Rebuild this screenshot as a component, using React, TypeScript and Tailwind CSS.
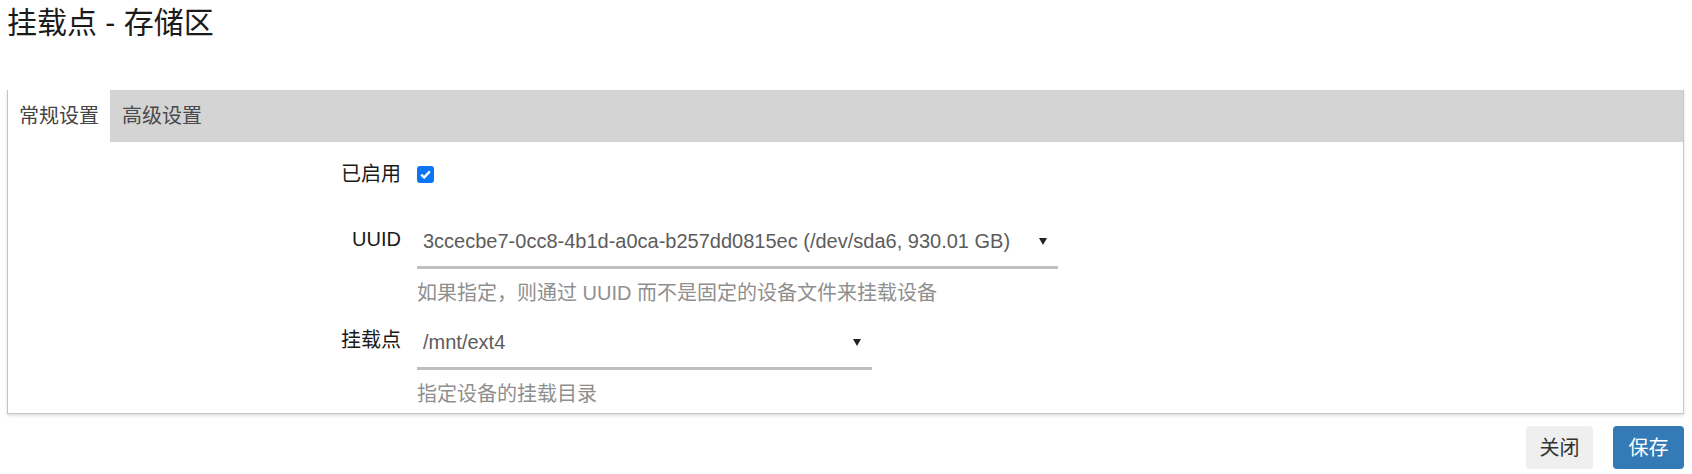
import React from "react";

function Arrow() {
  return (
    <svg width="8" height="7" viewBox="0 0 8 7" className="shrink-0">
      <polygon points="0,0 8,0 4,7" fill="#222" />
    </svg>
  );
}

function SelectField({ value, width }: { value: string; width: string }) {
  return (
    <div className={`flex h-[53px] items-center justify-between border-b-[3px] border-[#c0c0c0] ${width}`}>
      <span className="pl-[6px] text-[#5c5c5c]">{value}</span>
      <span className="mr-[11px]">
        <Arrow />
      </span>
    </div>
  );
}

export default function App() {
  return (
    <div className="w-[1692px] h-[474px] bg-white font-['Liberation_Sans','Noto_Sans_CJK_SC',sans-serif] text-[20px] leading-[28px]">
      <h2 className="pl-[7px] pt-[5px] text-[30px] leading-[35px] text-[#1a1a1a]">挂载点 - 存储区</h2>

      <div className="mt-[50px] ml-[7px] mr-[8px] border-x border-b border-[#c6c6c6] shadow-[0_2px_3px_rgba(0,0,0,0.12)]">
        <div className="flex h-[52px] bg-[#d4d4d4]">
          <div className="flex items-center bg-white px-[11px] text-[#444]">常规设置</div>
          <div className="flex items-center px-[12px] text-[#4a4a4a]">高级设置</div>
        </div>

        <div className="pt-[18px] pb-[5px]">
          <div className="flex items-center gap-[16px]">
            <div className="w-[393px] text-right text-[#1a1a1a]">已启用</div>
            <div className="flex h-[17px] w-[17px] items-center justify-center rounded-[3px] bg-[#0a75f5]">
              <svg width="11" height="9" viewBox="0 0 11 9">
                <path d="M1.2 4.6 L4.2 7.4 L9.8 1.4" fill="none" stroke="white" strokeWidth="2.4" />
              </svg>
            </div>
          </div>

          <div className="mt-[28px] flex items-start gap-[16px]">
            <div className="w-[393px] pt-[9px] text-right text-[#1a1a1a]">UUID</div>
            <div>
              <SelectField value="3ccecbe7-0cc8-4b1d-a0ca-b257dd0815ec (/dev/sda6, 930.01 GB)" width="w-[641px]" />
              <div className="mt-[10px] text-[#8f8f8f]">如果指定，则通过 UUID 而不是固定的设备文件来挂载设备</div>
            </div>
          </div>

          <div className="mt-[10px] flex items-start gap-[16px]">
            <div className="w-[393px] pt-[9px] text-right text-[#1a1a1a]">挂载点</div>
            <div>
              <SelectField value="/mnt/ext4" width="w-[455px]" />
              <div className="mt-[10px] text-[#8f8f8f]">指定设备的挂载目录</div>
            </div>
          </div>
        </div>
      </div>

      <div className="mt-[12px] mr-[8px] flex justify-end gap-[20px]">
        <button className="h-[43px] w-[67px] rounded-[4px] bg-[#efefef] text-[#333]">关闭</button>
        <button className="h-[43px] w-[71px] rounded-[4px] bg-[#337ab7] text-white">保存</button>
      </div>
    </div>
  );
}
